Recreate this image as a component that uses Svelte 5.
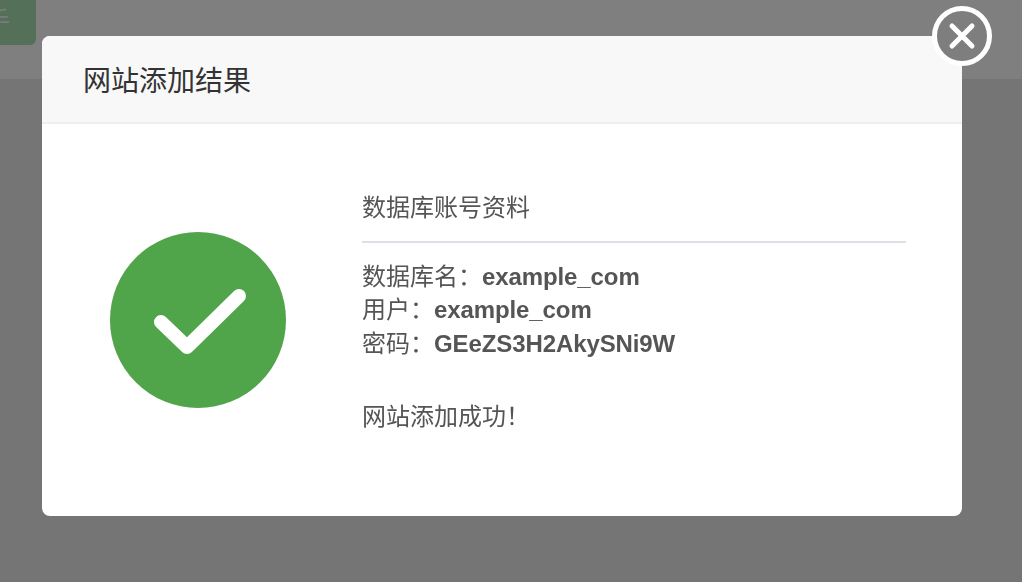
<script>
  const colon = '\uFF1A';
  const bang = '\uFF01';
  const rows = [
    { label: '数据库名', value: 'example_com' },
    { label: '用户', value: 'example_com' },
    { label: '密码', value: 'GEeZS3H2AkySNi9W' }
  ];
</script>

<div class="page">
  <header class="topbar">
    <div class="btn"><span>手</span></div>
  </header>
</div>

<div class="overlay">
  <section class="modal">
    <button class="close" aria-label="关闭">
      <svg width="50" height="50" viewBox="0 0 50 50" fill="none" stroke="#fff" stroke-width="5" stroke-linecap="round">
        <path d="M15 15 L35 35 M35 15 L15 35" />
      </svg>
    </button>
    <div class="head"><h2>网站添加结果</h2></div>
    <div class="body">
      <div class="icon">
        <svg width="176" height="176" viewBox="0 0 176 176">
          <circle cx="88" cy="88" r="88" fill="#50a44a" />
          <path d="M51 90 L77 115 L129 64" fill="none" stroke="#fff" stroke-width="14" stroke-linecap="round" stroke-linejoin="round" />
        </svg>
      </div>
      <div class="info">
        <h3>数据库账号资料</h3>
        <ul>
          {#each rows as row}
            <li>{row.label}{colon}<b>{row.value}</b></li>
          {/each}
        </ul>
        <p>网站添加成功{bang}</p>
      </div>
    </div>
  </section>
</div>

<style>
  :global(body) {
    margin: 0;
    overflow: hidden;
    background: #ebebeb;
    font-family: "Liberation Sans", "Noto Sans CJK SC", sans-serif;
  }
  .page {
    height: 582px;
  }
  .topbar {
    height: 79px;
    background: #ffffff;
    overflow: hidden;
  }
  .btn {
    width: 36px;
    height: 45px;
    background: #aae0b0;
    border-radius: 0 0 6px 0;
    display: flex;
    justify-content: flex-end;
    padding-top: 7px;
    box-sizing: border-box;
    color: #f4f4f4;
    font-size: 24px;
    line-height: 28px;
    overflow: hidden;
  }
  .btn span {
    margin-right: 26px;
    flex: none;
  }
  .overlay {
    position: fixed;
    inset: 0;
    background: rgba(0, 0, 0, 0.5);
    padding: 36px 60px 0 42px;
    box-sizing: border-box;
  }
  .modal {
    position: relative;
    width: 920px;
    height: 480px;
    background: #fff;
    border-radius: 8px;
    display: flex;
    flex-direction: column;
  }
  .close {
    position: absolute;
    top: -30px;
    right: -30px;
    width: 60px;
    height: 60px;
    padding: 0;
    border: 5px solid #fff;
    border-radius: 50%;
    background: #7e7e7e;
    box-sizing: border-box;
    display: flex;
    align-items: center;
    justify-content: center;
  }
  .head {
    height: 80px;
    background: #f8f8f8;
    border-bottom: 2px solid #eeeeee;
    border-radius: 8px 8px 0 0;
    padding: 6px 0 0 41px;
    display: flex;
    align-items: center;
  }
  h2 {
    margin: 0;
    font-size: 28px;
    font-weight: 400;
    color: #333;
    line-height: 40px;
  }
  .body {
    flex: 1;
    display: flex;
    color: #555;
    font-size: 24px;
  }
  .icon {
    width: 320px;
    padding: 108px 0 0 68px;
    box-sizing: border-box;
  }
  .info {
    width: 544px;
    padding-top: 66px;
  }
  h3 {
    margin: 0;
    font-size: 24px;
    font-weight: 400;
    line-height: 36px;
    padding-bottom: 15px;
    border-bottom: 2px solid #dde0e6;
  }
  ul {
    list-style: none;
    margin: 17px 0 0;
    padding: 0;
    line-height: 33.4px;
  }
  b {
    font-weight: 700;
    letter-spacing: -0.1px;
  }
  p {
    margin: 39px 0 0;
    line-height: 36px;
  }
</style>
